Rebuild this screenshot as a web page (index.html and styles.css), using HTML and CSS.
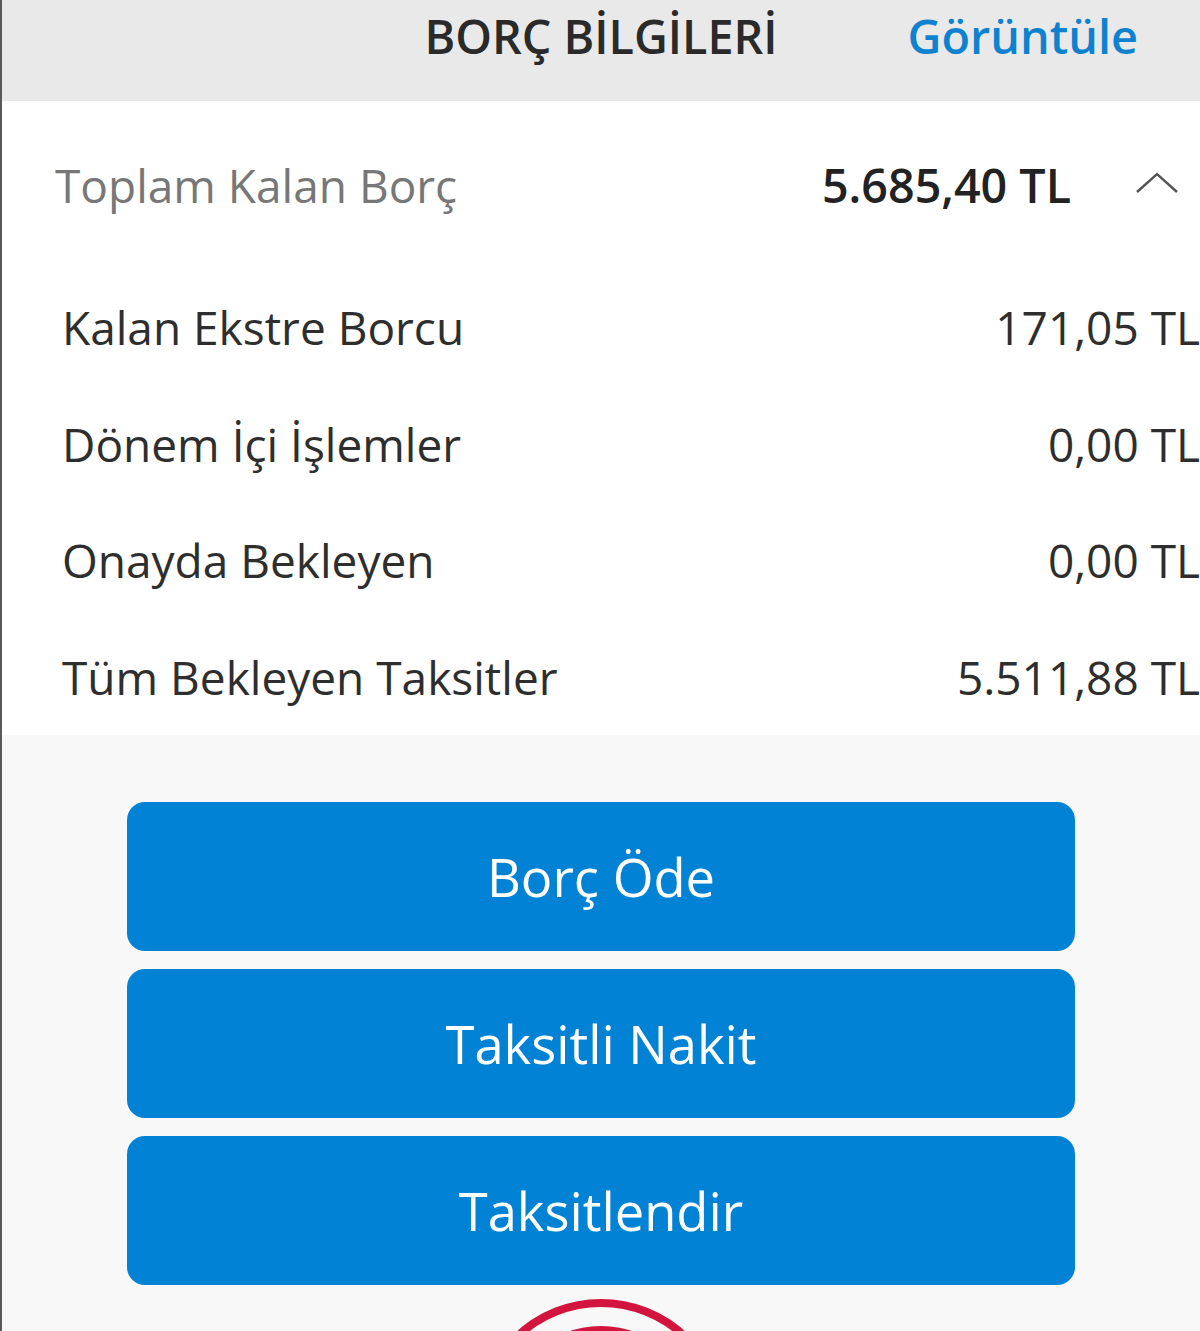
FILE: index.html
```html
<!DOCTYPE html>
<html lang="tr">
<head>
<meta charset="utf-8">
<link rel="stylesheet" href="styles.css">
</head>
<body>
<div class="page">
  <header class="topbar">
    <div class="title">BORÇ BİLGİLERİ</div>
    <a class="view-link">Görüntüle</a>
  </header>
  <section class="summary">
    <div class="total-row">
      <span class="total-label">Toplam Kalan Borç</span>
      <span class="total-value">5.685,40 TL</span>
      <svg class="chevron" width="44" height="24" viewBox="0 0 44 24"><polyline points="2,21 22,3 42,21" fill="none" stroke="#555" stroke-width="2.4"/></svg>
    </div>
    <div class="details">
      <div class="detail-row"><span>Kalan Ekstre Borcu</span><span>171,05 TL</span></div>
      <div class="detail-row"><span>Dönem İçi İşlemler</span><span>0,00 TL</span></div>
      <div class="detail-row"><span>Onayda Bekleyen</span><span>0,00 TL</span></div>
      <div class="detail-row"><span>Tüm Bekleyen Taksitler</span><span>5.511,88 TL</span></div>
    </div>
  </section>
  <section class="actions">
    <button class="btn">Borç Öde</button>
    <button class="btn">Taksitli Nakit</button>
    <button class="btn">Taksitlendir</button>
    <svg class="logo" width="260" height="140" viewBox="0 0 260 140">
      <circle cx="130" cy="130" r="122" fill="none" stroke="#d2143f" stroke-width="8"/>
      <circle cx="130" cy="130" r="95" fill="none" stroke="#d2143f" stroke-width="8"/>
    </svg>
  </section>
</div>
</body>
</html>
```
FILE: styles.css
```css
html, body {
  margin: 0;
  padding: 0;
  overflow: hidden;
  background: #f8f8f8;
}
body {
  font-family: "Open Sans", "Noto Sans", sans-serif;
}
.page {
  border-left: 2px solid #5a5a5a;
  min-height: 1331px;
  box-sizing: border-box;
}
.topbar {
  height: 101px;
  background: #e9e9e9;
  position: relative;
  display: flex;
  justify-content: center;
  align-items: flex-start;
  padding-top: 5px;
  box-sizing: border-box;
}
.title {
  font-size: 46.7px;
  font-weight: 600;
  color: #2a2a2a;
  line-height: 1.362;
}
.view-link {
  position: absolute;
  right: 62px;
  top: 5px;
  font-size: 46.8px;
  font-weight: 600;
  color: #0f82cf;
  line-height: 1.362;
}
.summary {
  background: #fff;
}
.total-row {
  height: 168px;
  display: flex;
  align-items: center;
  padding-left: 53px;
  padding-right: 21px;
}
.total-label {
  font-size: 46px;
  color: #777;
  flex: 1;
}
.total-value {
  font-size: 46.6px;
  font-weight: 600;
  color: #222;
  margin-right: 64px;
}
.chevron {
  margin-top: -4px;
}
.detail-row {
  height: 116.5px;
  display: flex;
  align-items: center;
  justify-content: space-between;
  padding-left: 60px;
  font-size: 46px;
  color: #2e2e2e;
}
.actions {
  padding: 67px 125px 0;
  display: flex;
  flex-direction: column;
  align-items: stretch;
  gap: 18px;
}
.btn {
  height: 149px;
  border: none;
  border-radius: 18px;
  background: #0282d4;
  color: #fff;
  font-family: "Open Sans", "Noto Sans", sans-serif;
  font-size: 52.5px;
  padding: 0;
}
.logo {
  align-self: center;
  margin-top: -8px;
}
```
